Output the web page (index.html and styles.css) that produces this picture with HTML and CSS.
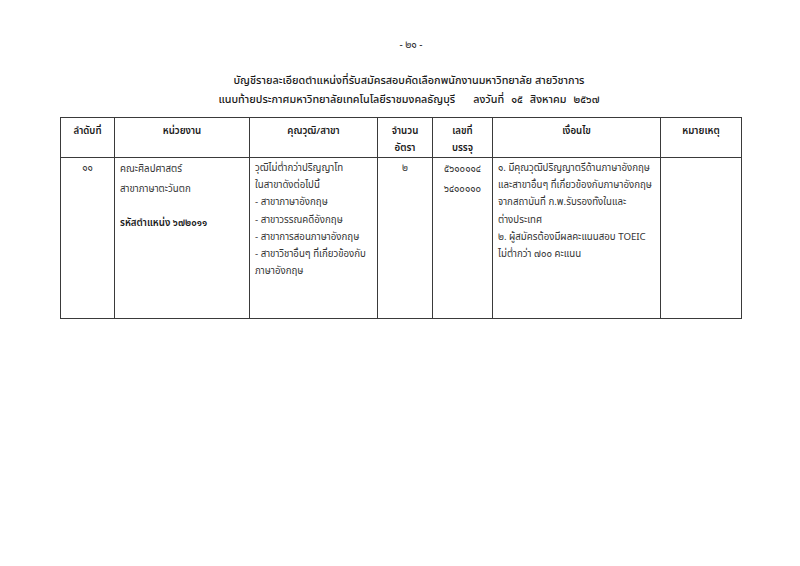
FILE: index.html
```html
<!DOCTYPE html>
<html lang="th">
<head>
<meta charset="utf-8">
<link rel="stylesheet" href="styles.css">
</head>
<body>
<div class="page">
  <div class="pageno">- ๒๑ -</div>
  <div class="title">
    <div>บัญชีรายละเอียดตำแหน่งที่รับสมัครสอบคัดเลือกพนักงานมหาวิทยาลัย สายวิชาการ</div>
    <div>แนบท้ายประกาศมหาวิทยาลัยเทคโนโลยีราชมงคลธัญบุรี<span class="g1">ลงวันที่</span><span class="g2">๑๕</span><span class="g2">สิงหาคม</span><span class="g2">๒๕๖๗</span></div>
  </div>
  <table class="tbl">
    <colgroup>
      <col class="c1"><col class="c2"><col class="c3"><col class="c4"><col class="c5"><col class="c6"><col class="c7">
    </colgroup>
    <thead>
      <tr>
        <th>ลำดับที่</th>
        <th>หน่วยงาน</th>
        <th>คุณวุฒิ/สาขา</th>
        <th>จำนวน<br>อัตรา</th>
        <th>เลขที่<br>บรรจุ</th>
        <th>เงื่อนไข</th>
        <th>หมายเหตุ</th>
      </tr>
    </thead>
    <tbody>
      <tr>
        <td class="center">๑๑</td>
        <td class="unit">คณะศิลปศาสตร์<br>สาขาภาษาตะวันตก<div class="code">รหัสตำแหน่ง ๖๗๒๐๑๑</div></td>
        <td>วุฒิไม่ต่ำกว่าปริญญาโท<br>ในสาขาดังต่อไปนี้<br>- สาขาภาษาอังกฤษ<br>- สาขาวรรณคดีอังกฤษ<br>- สาขาการสอนภาษาอังกฤษ<br>- สาขาวิชาอื่นๆ ที่เกี่ยวข้องกับ<br>ภาษาอังกฤษ</td>
        <td class="center">๒</td>
        <td class="center nums">๕๖๑๐๑๑๔<br>๖๔๑๐๑๑๐</td>
        <td>๑. มีคุณวุฒิปริญญาตรีด้านภาษาอังกฤษ<br>และสาขาอื่นๆ ที่เกี่ยวข้องกับภาษาอังกฤษ<br>จากสถาบันที่ ก.พ.รับรองทั้งในและ<br>ต่างประเทศ<br>๒. ผู้สมัครต้องมีผลคะแนนสอบ TOEIC<br>ไม่ต่ำกว่า ๗๐๐ คะแนน</td>
        <td></td>
      </tr>
    </tbody>
  </table>
</div>
</body>
</html>
```
FILE: styles.css
```css
html, body {
  margin: 0;
  padding: 0;
  background: #ffffff;
}
body {
  font-family: "Noto Sans Thai", "Noto Sans", "DejaVu Sans", sans-serif;
  color: #2a2a2a;
}
.page {
  width: 800px;
  height: 566px;
  padding-top: 37px;
  box-sizing: border-box;
}
.pageno {
  text-align: center;
  font-size: 10px;
  line-height: 16px;
  padding-left: 22px;
}
.title {
  margin-top: 19px;
  text-align: center;
  font-size: 10.8px;
  line-height: 19px;
  font-weight: 500;
  color: #1a1a1a;
  padding-left: 18px;
}
.title .g1 { margin-left: 18px; }
.title .g2 { margin-left: 7px; }
.tbl {
  margin: 7px 0 0 60px;
  width: 681px;
  border-collapse: collapse;
  table-layout: fixed;
  font-size: 9.7px;
}
.c1 { width: 54px; }
.c2 { width: 135px; }
.c3 { width: 128px; }
.c4 { width: 55px; }
.c5 { width: 60px; }
.c6 { width: 168px; }
.c7 { width: 81px; }
.tbl th, .tbl td {
  border: 1.5px solid #3a3a3a;
  padding: 0 5px;
  vertical-align: top;
  white-space: nowrap;
}
.tbl th {
  font-weight: 600;
  color: #1a1a1a;
  text-align: center;
  height: 29px;
  line-height: 17px;
  padding-top: 5px;
  padding-bottom: 0;
}
.tbl td {
  height: 158px;
  line-height: 17.2px;
  padding-top: 2px;
  color: #333;
}
.tbl td.unit { line-height: 19.5px; }
.tbl td .code {
  margin-top: 15px;
  font-weight: 600;
  color: #1a1a1a;
}
.tbl td.nums { line-height: 19.5px; }
.tbl td.center { text-align: center; }
```
